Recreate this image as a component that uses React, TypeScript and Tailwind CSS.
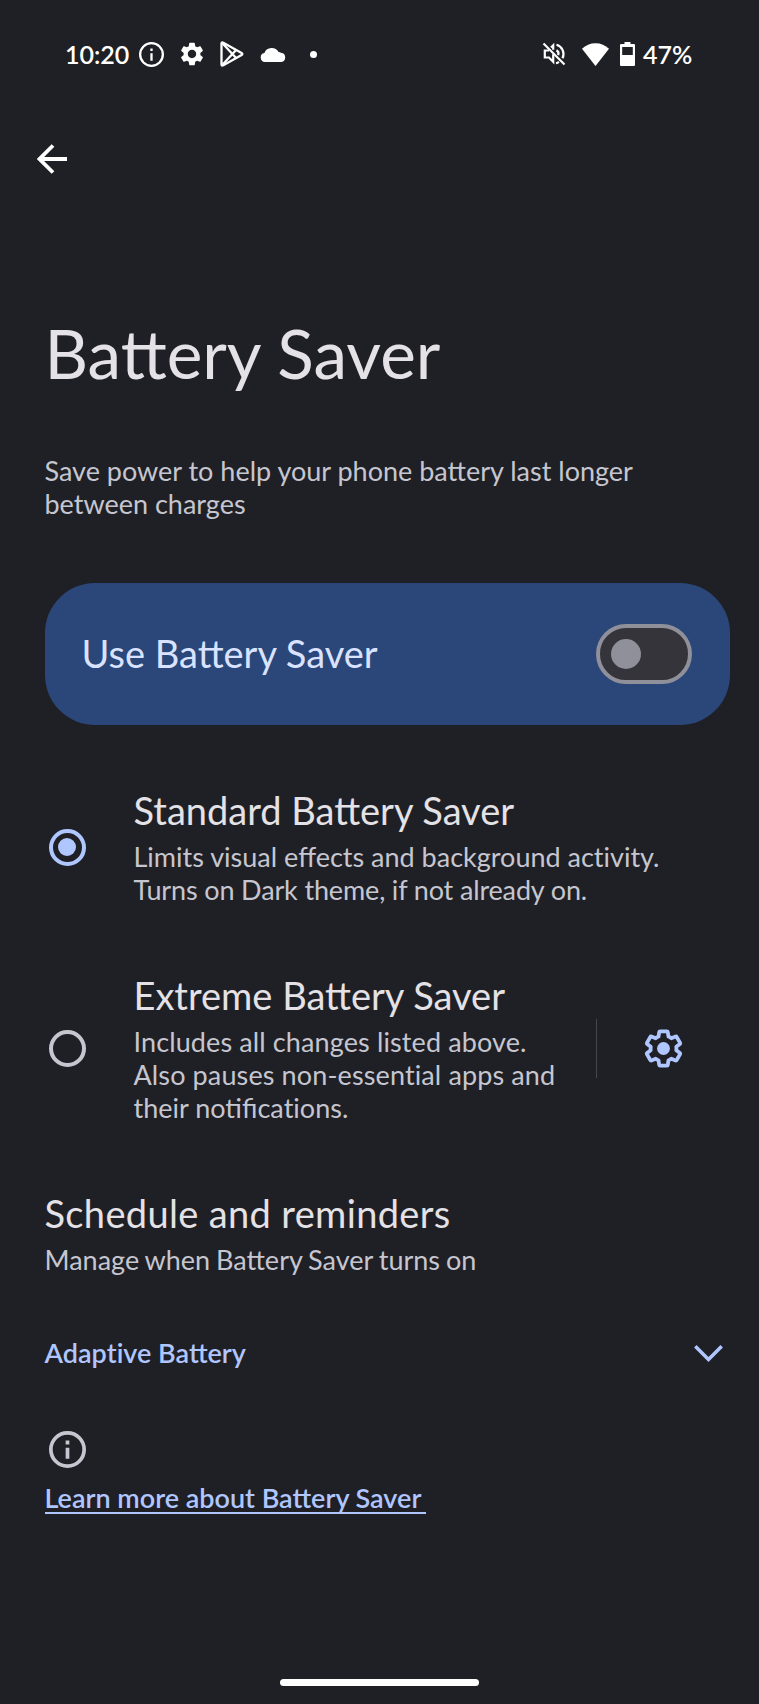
import type { ReactNode } from "react";
import { MdSettings } from "react-icons/md";

function InfoIcon({ className, stroke }: { className: string; stroke: number }) {
  return (
    <svg viewBox="0 0 24 24" className={className} fill="none" stroke="currentColor">
      <circle cx="12" cy="12" r={12 - stroke / 2} strokeWidth={stroke} />
      <path d="M12 10.9v7.1M12 6.2v2.5" strokeWidth={stroke} />
    </svg>
  );
}

function GearIcon() {
  return (
    <svg viewBox="0 0 24 24" className="size-[43px]" fill="none" stroke="currentColor" strokeWidth="2.1" strokeLinejoin="round">
      <path d="M19.14 12.94c.04-.3.06-.61.06-.94 0-.32-.02-.64-.07-.94l2.03-1.58c.18-.14.23-.41.12-.61l-1.92-3.32c-.12-.22-.37-.29-.59-.22l-2.39.96c-.5-.38-1.03-.7-1.62-.94l-.36-2.54c-.04-.24-.24-.41-.48-.41h-3.84c-.24 0-.43.17-.47.41l-.36 2.54c-.59.24-1.13.57-1.62.94l-2.39-.96c-.22-.08-.47 0-.59.22L2.74 8.87c-.12.21-.08.47.12.61l2.03 1.58c-.05.3-.09.63-.09.94s.02.64.07.94l-2.03 1.58c-.18.14-.23.41-.12.61l1.92 3.32c.12.22.37.29.59.22l2.39-.96c.5.38 1.03.7 1.62.94l.36 2.54c.05.24.24.41.48.41h3.84c.24 0 .44-.17.47-.41l.36-2.54c.59-.24 1.13-.56 1.62-.94l2.39.96c.22.08.47 0 .59-.22l1.92-3.32c.12-.22.07-.47-.12-.61l-2.01-1.58z" />
      <circle cx="12" cy="12" r="3.6" fill="currentColor" stroke="none" />
    </svg>
  );
}

function StatusBar() {
  return (
    <div className="flex h-[108px] items-center pl-[65px] pr-[66px] text-white">
      <span className="w-[66px] whitespace-nowrap text-[25px] font-semibold leading-none">10:20</span>
      <InfoIcon className="ml-[8px] size-[25px]" stroke={2.2} />
      <MdSettings className="ml-[14px] size-[28px]" />
      <svg viewBox="0 0 24 26" className="ml-[14px] h-[26px] w-[24px]" fill="none" stroke="currentColor" strokeWidth="2.3" strokeLinejoin="round">
        <path d="M1.5 2.6Q1.5.8 3.3 1.7L21.6 12Q23.2 13 21.6 14L3.3 24.3Q1.5 25.2 1.5 23.4Z" />
        <path d="M2 1.8 16.300 17.200M2 24.200 16.300 8.800" />
      </svg>
      <svg viewBox="0 0 26 15" className="ml-[16px] h-[15px] w-[26px]" fill="currentColor">
        <path d="M5 15a4.6 4.6 0 0 1-.6-9.1A8 8 0 0 1 18.6 5 5.4 5.4 0 0 1 21 5.7 4.7 4.7 0 0 1 21.3 15Z" />
      </svg>
      <span className="ml-[24px] size-[7px] rounded-full bg-white" />

      <svg viewBox="0 0 24 24" className="ml-auto size-[24px]" fill="none" stroke="currentColor" strokeWidth="2.2">
        <path d="M1.5 1.5 22.5 22.5" />
        <path d="M7 8.5H2.8v7H7l4.2 4.3v-7.5M9 5.5l2.2-2.2v4.5" />
        <path d="M14.5 8.3a4 4 0 0 1 1.7 4.8M14.5 2.8a9.5 9.5 0 0 1 6 13.4M14 21.2a9 9 0 0 0 3-1.3" />
      </svg>
      <svg viewBox="0 0 27 23" className="ml-[16px] h-[23px] w-[27px]" fill="currentColor">
        <path d="M0 5.8Q5.5.2 13.5.2T27 5.8L13.5 23Z" />
      </svg>
      <svg viewBox="0 0 15 24" className="ml-[11px] h-[24px] w-[15px]" fill="currentColor">
        <path fillRule="evenodd" d="M4.5 0h6v2H14q1 0 1 1v20q0 1-1 1H1q-1 0-1-1V3q0-1 1-1h3.5ZM2.2 5v8h10.6V5Z" />
      </svg>
      <span className="ml-[8px] w-[50px] whitespace-nowrap text-[25px] font-semibold leading-none">47%</span>
    </div>
  );
}

function Radio({ checked }: { checked?: boolean }) {
  return (
    <span
      className={
        checked
          ? "flex size-[37px] items-center justify-center rounded-full border-4 border-[#b0c6ff]"
          : "size-[37px] rounded-full border-4 border-[#c6c6d0]"
      }
    >
      {checked && <span className="size-[18px] rounded-full bg-[#b0c6ff]" />}
    </span>
  );
}

function Lines({ children }: { children: ReactNode }) {
  return <div className="whitespace-nowrap text-[27px] leading-[33px] text-[#c6c6d0]">{children}</div>;
}

function Heading({ children }: { children: ReactNode }) {
  return <h2 className="mb-[8px] whitespace-nowrap text-[38px] leading-[44px] text-[#e4e2e6]">{children}</h2>;
}

// keeps "ti" as two separate letters
function Plain({ children }: { children: ReactNode }) {
  return <span className="[font-variant-ligatures:none]">{children}</span>;
}

export default function App() {
  return (
    <div className="flex h-[1704px] w-[759px] flex-col bg-[#1f2025] font-[Lato,'Liberation_Sans',sans-serif]">
      <StatusBar />

      <header className="flex h-[101px] items-center pl-[37px] text-white">
        <svg viewBox="0 0 31 30" className="h-[30px] w-[31px]" fill="none" stroke="currentColor" strokeWidth="3.8">
          <path d="M30 15H3M16 1.5 2.5 15 16 28.5" />
        </svg>
      </header>

      <main className="flex flex-col pl-[44.5px] pr-[29.5px] pt-[104px]">
        <h1 className="whitespace-nowrap text-[67.5px] leading-[80px] text-[#e4e2e6]">Battery Saver</h1>

        <div className="mt-[61px]">
          <Lines>
            Save power to help your phone battery last longer
            <br />
            between charges
          </Lines>
        </div>

        <div className="mt-[63px] flex h-[142px] items-center justify-between rounded-[50px] bg-[#2b4678] pl-[37px] pr-[38px]">
          <span className="whitespace-nowrap pb-[3px] text-[38px] leading-[44px] text-[#d9e2ff]">Use Battery Saver</span>
          <span className="flex h-[60px] w-[96px] items-center rounded-full border-4 border-[#90909a] bg-[#34343a] pl-[11px]">
            <span className="size-[30px] rounded-full bg-[#90909a]" />
          </span>
        </div>

        <div className="mt-[63px] flex h-[118px] items-center">
          <div className="w-[89px] pl-[4px]">
            <Radio checked />
          </div>
          <div>
            <Heading>Standard Battery Saver</Heading>
            <Lines>
              Limits visual effects and background <Plain>activity.</Plain>
              <br />
              <span className="tracking-[-0.15px]">Turns on Dark theme, if not already on.</span>
            </Lines>
          </div>
        </div>

        <div className="mt-[67px] flex h-[151px] items-center">
          <div className="flex w-[89px] pl-[4px]">
            <Radio />
          </div>
          <div className="w-[462px]">
            <Heading>Extreme Battery Saver</Heading>
            <Lines>
              <span className="tracking-[0.12px]">Includes all changes listed above.</span>
              <br />
              <span className="tracking-[0.12px]">Also pauses non-essential apps and</span>
              <br />
              their notifica<Plain>tions.</Plain>
            </Lines>
          </div>
          <span className="h-[59px] w-[1.5px] bg-[#46464d]" />
          <span className="ml-[45px] text-[#b0c6ff]">
            <GearIcon />
          </span>
        </div>

        <div className="mt-[67px]">
          <Heading>
            <span className="tracking-[0.35px]">Schedule and reminders</span>
          </Heading>
          <div className="[word-spacing:-1px]">
            <Lines>Manage when Battery Saver turns on</Lines>
          </div>
        </div>

        <div className="mt-[60px] flex h-[33px] items-center justify-between pr-[7px] text-[#b0c6ff]">
          <span className="whitespace-nowrap text-[27px] font-semibold leading-[33px]">
            Adap<Plain>tive</Plain> Battery
          </span>
          <svg viewBox="0 0 29 17" className="mt-[2px] h-[17px] w-[29px]" fill="none" stroke="currentColor" strokeWidth="3.5">
            <path d="M1.3 1.3 14.5 14.5 27.7 1.3" />
          </svg>
        </div>

        <InfoIcon className="ml-[4px] mt-[62px] size-[37px] text-[#c6c6d0]" stroke={2.4} />
        <a className="mt-[13px] h-[33px] w-[381px] whitespace-nowrap border-b-2 border-[#b0c6ff] text-[27px] font-semibold leading-[33px] text-[#b0c6ff]">
          Learn more about Battery Saver
        </a>
      </main>

      <div className="mb-[18px] mt-auto h-[7px] w-[199px] self-center rounded-full bg-white" />
    </div>
  );
}
